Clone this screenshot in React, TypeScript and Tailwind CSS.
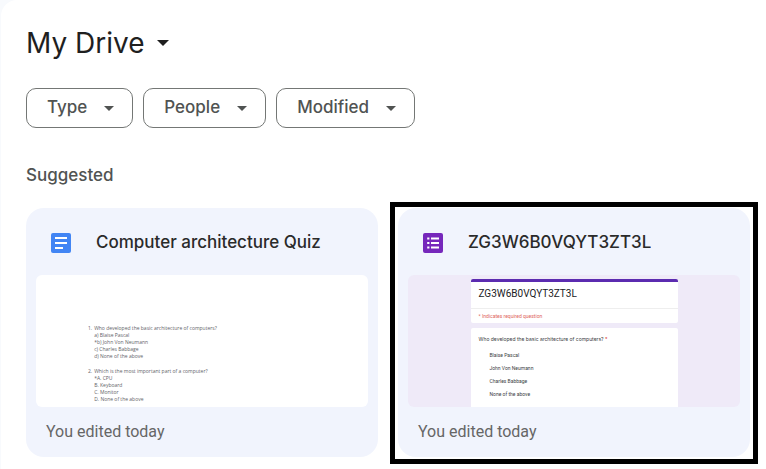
import type { ReactNode } from 'react';

const filters = ['Type', 'People', 'Modified'];

const quiz = [
  {
    question: 'Who developed the basic architecture of computers?',
    answers: ['a) Blaise Pascal', '*b) John Von Neumann', 'c) Charles Babbage', 'd) None of the above'],
  },
  {
    question: 'Which is the most important part of a computer?',
    answers: ['*A. CPU', 'B. Keyboard', 'C. Monitor', 'D. None of the above'],
  },
];

const formOptions = ['Blaise Pascal', 'John Von Neumann', 'Charles Babbage', 'None of the above'];

function Caret({ className }: { className: string }) {
  return (
    <svg viewBox="0 0 10 5" className={className} fill="currentColor" aria-hidden="true">
      <path d="M0 0h10L5 5z" />
    </svg>
  );
}

function DocsIcon() {
  return (
    <svg viewBox="0 0 20 20" className="h-5 w-5 shrink-0" aria-hidden="true">
      <rect width="20" height="20" rx="2" fill="#4285f4" />
      <path d="M4 4h12v2H4zM4 9h12v2H4zM4 14h8v2H4z" fill="#fff" />
    </svg>
  );
}

function FormsIcon() {
  return (
    <svg viewBox="0 0 20 20" className="h-5 w-5 shrink-0" aria-hidden="true">
      <rect width="20" height="20" rx="2" fill="#7627bb" />
      <path
        d="M4.2 4.4h2.2v2.2H4.2zM8 4.4h8v2.2H8zM4.2 8.9h2.2v2.2H4.2zM8 8.9h8v2.2H8zM4.2 13.4h2.2v2.2H4.2zM8 13.4h8v2.2H8z"
        fill="#fff"
      />
    </svg>
  );
}

function DocPreview() {
  return (
    <div className="h-[132px] overflow-hidden rounded-md bg-white pt-[50px] pl-[52px] font-['Open_Sans'] text-[5px] leading-[7px] text-[#5f6368]">
      <ol className="space-y-2">
        {quiz.map((item, index) => (
          <li key={item.question} className="flex gap-[2px]">
            <span>{index + 1}.</span>
            <div>
              <p>{item.question}</p>
              {item.answers.map((answer) => (
                <p key={answer}>{answer}</p>
              ))}
            </div>
          </li>
        ))}
      </ol>
    </div>
  );
}

function FormPreview() {
  return (
    <div className="h-[132px] overflow-hidden rounded-md bg-[#efeaf8] pt-1">
      <div className="mx-auto w-[207px] space-y-[5px] text-[#3c4043]">
        <div className="rounded-[2px] border-t-[3px] border-[#5b2bb0] bg-white">
          <p className="px-2 pt-1 pb-[6px] text-[10px] leading-[16px] text-[#202124]">ZG3W6B0VQYT3ZT3L</p>
          <p className="border-t border-[#eeeeee] px-2 py-[3px] text-[5px] leading-[8px] text-[#e0655c]">
            * Indicates required question
          </p>
        </div>
        <div className="rounded-t-[2px] bg-white px-2 pt-2 pb-4 text-[5px] leading-[6px]">
          <p className="font-[Inter]">
            Who developed the basic architecture of computers? <span className="text-[#d93025]">*</span>
          </p>
          <ul className="space-y-[7px] pt-[10px] pl-[11px]">
            {formOptions.map((option) => (
              <li key={option}>{option}</li>
            ))}
          </ul>
        </div>
      </div>
    </div>
  );
}

type FileCardProps = {
  title: string;
  icon: ReactNode;
  highlighted?: boolean;
  children: ReactNode;
};

function FileCard({ title, icon, highlighted, children }: FileCardProps) {
  return (
    <article className="relative min-w-0 rounded-[18px] bg-[#f1f4fd] px-[10px]">
      <header className="flex h-[67px] items-center gap-[25px] pt-[2px] pl-[15px]">
        {icon}
        <h3 className="truncate font-[Inter] text-[17px] font-medium text-[#2a2a2a]">{title}</h3>
      </header>
      {children}
      <p className="h-[50px] pl-[10px] text-base leading-[50px] text-[#666666]">You edited today</p>
      {highlighted && (
        <div className="pointer-events-none absolute -inset-x-2 -top-[6px] -bottom-[7px] border-5 border-black" />
      )}
    </article>
  );
}

export default function App() {
  return (
    <div className="min-h-screen bg-[#f8fafd] pl-px font-[Roboto,sans-serif]">
      <main className="min-h-screen rounded-tl-2xl bg-white pt-6 pr-4 pb-3 pl-[25px]">
        <h1>
          <button type="button" className="flex items-center gap-3 font-[Inter] text-[28px] leading-[38px] text-[#1f1f1f]">
            My Drive
            <Caret className="h-[6px] w-3" />
          </button>
        </h1>

        <div className="mt-[26px] flex gap-[10px]">
          {filters.map((filter) => (
            <button
              key={filter}
              type="button"
              className="flex h-10 items-center gap-[17px] rounded-[10px] border border-[#747775] pr-[18px] pl-5 font-[Inter] text-[17px] font-medium text-[#505352]"
            >
              {filter}
              <Caret className="h-[5px] w-[10px]" />
            </button>
          ))}
        </div>

        <h2 className="mt-[33px] font-[Inter] text-[17px] leading-[28px] font-medium text-[#505352]">Suggested</h2>

        <div className="mt-[19px] grid grid-cols-2 gap-5">
          <FileCard title="Computer architecture Quiz" icon={<DocsIcon />}>
            <DocPreview />
          </FileCard>
          <FileCard title="ZG3W6B0VQYT3ZT3L" icon={<FormsIcon />} highlighted>
            <FormPreview />
          </FileCard>
        </div>
      </main>
    </div>
  );
}
